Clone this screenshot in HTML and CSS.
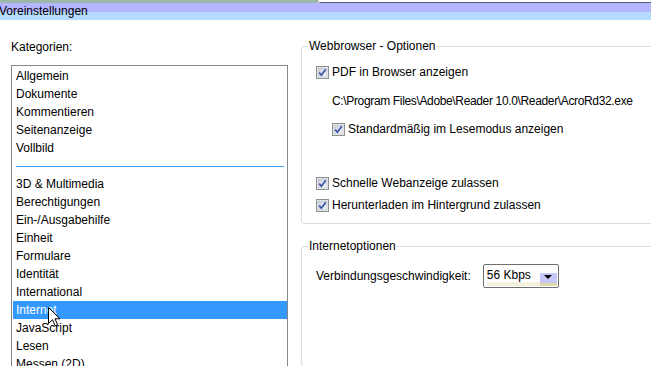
FILE: index.html
```html
<!DOCTYPE html>
<html lang="de">
<head>
    <meta charset="UTF-8">
    <meta name="viewport" content="width=device-width, initial-scale=1.0">
    <title>Voreinstellungen</title>
    <link rel="stylesheet" href="styles.css">
</head>
<body>
    <svg class="defs" width="0" height="0">
        <defs>
            <linearGradient id="boxFill" x1="0" y1="0" x2="1" y2="1">
                <stop offset="0" stop-color="#cbcfd8"/>
                <stop offset="1" stop-color="#f4f5f8"/>
            </linearGradient>
            <symbol id="checked" viewBox="0 0 13 13">
                <rect x="0.5" y="0.5" width="12" height="12" fill="#f4f4f4" stroke="#8e8f8f"/>
                <rect x="2" y="2" width="9" height="9" fill="url(#boxFill)" stroke="#b4b9c4" stroke-width="0.6"/>
                <path d="M3.2 6.6 L5.4 9.2 L9.8 3.2" fill="none" stroke="#3554a8" stroke-width="1.7"/>
            </symbol>
        </defs>
    </svg>

    <div class="titlebar">
        <div class="frame-top">
            <div class="frame-left"></div>
            <div class="frame-right"></div>
        </div>
        <div class="title">Voreinstellungen</div>
    </div>

    <div class="dialog">
        <div class="categories">
            <div class="label">Kategorien:</div>
            <div class="listbox">
                <div class="item">Allgemein</div>
                <div class="item">Dokumente</div>
                <div class="item">Kommentieren</div>
                <div class="item">Seitenanzeige</div>
                <div class="item">Vollbild</div>
                <div class="separator"></div>
                <div class="item">3D &amp; Multimedia</div>
                <div class="item">Berechtigungen</div>
                <div class="item">Ein-/Ausgabehilfe</div>
                <div class="item">Einheit</div>
                <div class="item">Formulare</div>
                <div class="item">Identität</div>
                <div class="item">International</div>
                <div class="item selected">Internet</div>
                <div class="item">JavaScript</div>
                <div class="item">Lesen</div>
                <div class="item">Messen (2D)</div>
            </div>
        </div>

        <div class="options">
            <fieldset class="group">
                <legend>Webbrowser - Optionen</legend>
                <div class="row">
                    <svg class="check" width="13" height="13"><use href="#checked"/></svg>
                    <span>PDF in Browser anzeigen</span>
                </div>
                <div class="row indent path">C:\Program Files\Adobe\Reader 10.0\Reader\AcroRd32.exe</div>
                <div class="row indent std">
                    <svg class="check" width="13" height="13"><use href="#checked"/></svg>
                    <span>Standardmäßig im Lesemodus anzeigen</span>
                </div>
                <div class="row fast">
                    <svg class="check" width="13" height="13"><use href="#checked"/></svg>
                    <span>Schnelle Webanzeige zulassen</span>
                </div>
                <div class="row bg">
                    <svg class="check" width="13" height="13"><use href="#checked"/></svg>
                    <span>Herunterladen im Hintergrund zulassen</span>
                </div>
            </fieldset>

            <fieldset class="group internet">
                <legend>Internetoptionen</legend>
                <div class="row speed">
                    <span>Verbindungsgeschwindigkeit:</span>
                    <div class="combo">
                        <span class="combo-value">56 Kbps</span>
                        <span class="combo-btn"><span class="arrow"></span></span>
                    </div>
                </div>
            </fieldset>
        </div>
    </div>

    <svg class="cursor" width="13" height="20" viewBox="0 0 13 20">
        <path d="M0.5 0.5 L0.5 16.5 L4.5 12.7 L7.2 18.8 L9.6 17.8 L7 11.8 L12 11.8 Z" fill="#fff" stroke="#000" stroke-width="1"/>
    </svg>
</body>
</html>
```

FILE: styles.css
```css
:root {
    --text: #000;
    --select: #3399ff;
    --list-border: #828790;
    --group-border: #d5dfe5;
}

* {
    box-sizing: border-box;
}

html, body {
    margin: 0;
    padding: 0;
    overflow: hidden;
}

body {
    background: #fff;
    color: var(--text);
    font-family: 'Liberation Sans', Arial, sans-serif;
    font-size: 12px;
    width: 651px;
    height: 366px;
    position: relative;
}

.defs {
    position: absolute;
}

/* window caption */
.titlebar {
    height: 20px;
}

.frame-top {
    display: flex;
    height: 3px;
}

.frame-left {
    width: 318px;
    background: #9ab7a7;
}

.frame-right {
    flex: 1;
    background: #fff;
    border-bottom: 1px solid #4e5f78;
    border-bottom-left-radius: 3px;
}

.title {
    height: 17px;
    line-height: 17px;
    margin-left: -1px;
    background: linear-gradient(#b4b4ff 0, #b4b4ff 9px, #b4dcff 9px, #b4dcff 100%);
}

/* dialog body */
.dialog {
    display: flex;
    gap: 14px;
    padding-left: 11px;
}

.categories {
    width: 276px;
    flex-shrink: 0;
    padding-top: 18px;
}

.label {
    line-height: 18px;
    margin-bottom: 9px;
}

.listbox {
    width: 277px;
    height: 320px;
    border: 1px solid var(--list-border);
    padding-top: 1px;
    overflow: hidden;
}

.item {
    height: 18px;
    line-height: 18px;
    margin: 0 0 0 1px;
    padding-left: 3px;
    white-space: nowrap;
}

.item.selected {
    background: var(--select);
    color: #fff;
}

.separator {
    height: 18px;
    display: flex;
    align-items: center;
    padding: 0 3px 0 4px;
}

.separator::before {
    content: '';
    flex: 1;
    height: 1px;
    background: #3c9cf0;
}

/* option groups */
.options {
    flex-shrink: 0;
    width: 380px;
    padding-top: 17px;
}

.group {
    margin: 0;
    padding: 8px 0 9px 6px;
    border: 1px solid var(--group-border);
    border-radius: 3px;
    min-width: 0;
}

.group legend {
    padding: 0 1px;
    line-height: 18px;
}

.group.internet {
    margin-top: 13px;
    padding-top: 10px;
    height: 130px;
}

.row {
    display: flex;
    align-items: center;
    height: 18px;
    padding-left: 8px;
    white-space: nowrap;
}

.row.indent {
    padding-left: 24px;
}

.row.path {
    margin-top: 11px;
    letter-spacing: -0.35px;
}

.row.std {
    margin-top: 10px;
}

.row.fast {
    margin-top: 36px;
}

.row.bg {
    margin-top: 4px;
}

.check {
    flex-shrink: 0;
    margin-right: 3px;
}

.row.speed {
    height: 22px;
    gap: 12px;
}

.combo {
    display: flex;
    width: 76px;
    height: 24px;
    border: 1px solid #6f6f6f;
    border-radius: 2px;
    padding: 2px 1px 1px 3px;
    background: #fff;
}

.combo-value {
    flex: 1;
    line-height: 17px;
    box-shadow: inset 0 -4px 0 #f3f1dc;
}

.combo-btn {
    width: 17px;
    display: flex;
    align-items: center;
    justify-content: center;
    background: linear-gradient(#fff 0, #fff 6px, #c8c8f8 6px, #c8c8f8 16px, #dedaa8 16px);
}

.arrow {
    width: 0;
    height: 0;
    margin-top: 1px;
    border-left: 4px solid transparent;
    border-right: 4px solid transparent;
    border-top: 4px solid #000;
}

/* mouse pointer over the list */
.cursor {
    position: absolute;
    left: 48px;
    top: 307px;
}
```
